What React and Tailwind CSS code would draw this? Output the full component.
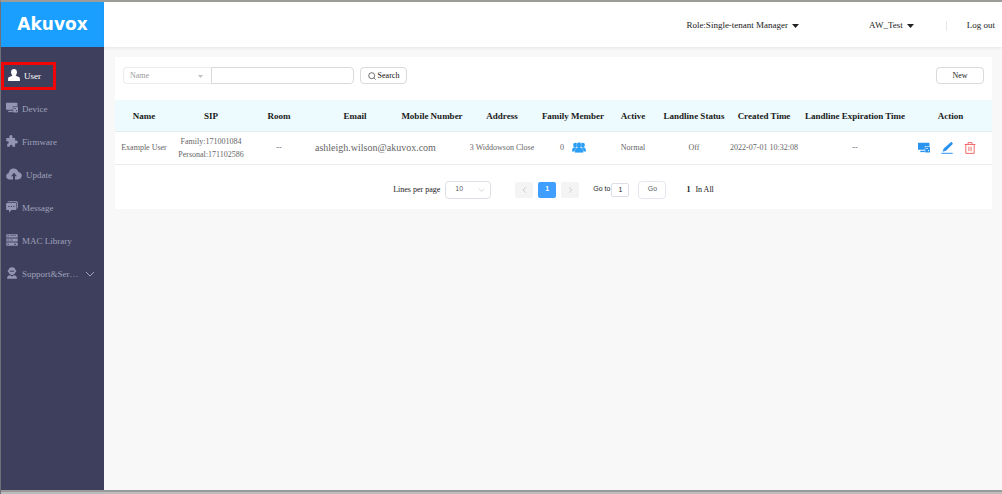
import { useState } from "react"

const UserIcon = () => (
  <svg className="h-3 w-3" viewBox="0 0 12 12" fill="currentColor">
    <ellipse cx="6" cy="3.2" rx="2.9" ry="3.2" />
    <path d="M4.200 5.300h3.600v1.400l3 1.300c.8.3 1.100.9 1.100 1.800V12H.1V9.800c0-.9.300-1.500 1.100-1.800l3-1.300z" />
  </svg>
)

const DeviceIcon = ({ className }) => (
  <svg className={className} viewBox="0 0 13 11" fill="currentColor">
    <path d="M.6.4h11.200c.3 0 .6.3.6.6v3.100H7.400V8H.6C.3 8 0 7.700 0 7.400V1C0 .7.3.4.6.4z" />
    <path d="M2.500 9h4.900v1.500H2.500z" />
    <path d="M8.300 4.600h4.200c.3 0 .5.2.5.5v5.200c0 .3-.2.500-.5.500H8.300c-.3 0-.5-.2-.5-.5V5.100c0-.3.2-.5.5-.5zM9 6.200v.8h1.800v-.8zm2 1.900v1.400h1V8.100z" fillRule="evenodd" />
  </svg>
)

const FirmwareIcon = () => (
  <svg className="h-3 w-3" viewBox="0 0 12 12" fill="currentColor">
    <path d="M3.400 3c-.4-1.700.3-2.900 1.500-2.900S6.800 1.300 6.400 3h2.700v2.600c1.600-.4 2.700.2 2.700 1.400S10.700 8.800 9.100 8.400v3.300H6.500c.2-1.300-.4-2-1.300-2s-1.500.7-1.300 2H1.200V8.800c1 .1 1.500-.4 1.500-1.200S2.100 6.200.3 6.400V3z" />
  </svg>
)

const UpdateIcon = () => (
  <svg className="h-3 w-4" viewBox="0 0 16 12" fill="currentColor">
    <path fillRule="evenodd" d="M3.600 11.500C1.500 11.500.2 10 .2 8.200c0-1.600 1-2.800 2.500-3.200C2.900 2.300 5 .4 7.700.4c2.300 0 4.100 1.400 4.700 3.500 2 .2 3.400 1.800 3.400 3.700 0 2.200-1.600 3.900-3.900 3.900H9V8.300h2L8 4.800 5 8.300h2v3.200z" />
  </svg>
)

const MessageIcon = () => (
  <svg className="h-3 w-3" viewBox="0 0 12 12" fill="currentColor">
    <path d="M2.600.3h7.800c.9 0 1.500.6 1.500 1.500v4.500c0 .7-.3 1.200-.8 1.400V3c0-1.100-.7-1.700-1.700-1.700H1.300c.2-.6.7-1 1.300-1z" />
    <path fillRule="evenodd" d="M1.400 1.900h7.700c.8 0 1.300.5 1.300 1.300v4.500c0 .8-.5 1.300-1.300 1.300H5.500L3 11.500V9H1.400C.6 9 .1 8.500.1 7.700V3.200c0-.8.5-1.300 1.300-1.300zM2.200 4.900v1.200h1.200V4.900zm2.500 0v1.200h1.200V4.900zm2.500 0v1.200h1.200V4.900z" />
  </svg>
)

const LibraryIcon = () => (
  <svg className="h-3 w-3" viewBox="0 0 12 12" fill="currentColor">
    <path fillRule="evenodd" d="M.3.2h11.400v3.200H.3zM1.500 1.300v1h1.300v-1zM4 1.600v.5h6v-.5z" />
    <path fillRule="evenodd" d="M.3 4.400h11.400v3.200H.3zM1.500 5.500v1h1.300v-1zM4 5.800v.5h3v-.5z" />
    <path fillRule="evenodd" d="M.3 8.600h11.400v3.200H.3zM1.500 9.700v1h1.300v-1zM8 9.700v1h2v-1z" />
  </svg>
)

const SupportIcon = () => (
  <svg className="h-3 w-3" viewBox="0 0 12 12" fill="currentColor">
    <path d="M6 .2c2.100 0 3.400 1.300 3.500 3 .6.1.8.4.8 1s-.3 1-.9 1C8.700 7 7.500 8 6 8S3.300 7 2.600 5.200c-.6 0-.9-.4-.9-1s.2-.9.8-1C2.600 1.500 3.900.2 6 .2z" />
    <path d="M3.800 3.700c1.600.1 2.900-.2 4.400 0v.7c-1.500.4-2.900.4-4.400 0z" fill="#3d3f5c" />
    <path d="M1 11.800c0-2.200 1.100-3.400 3.100-3.600L6 9.400l1.900-1.200c2 .2 3.100 1.400 3.100 3.600z" />
  </svg>
)

const FamilyIcon = () => (
  <svg className="h-[11px] w-[14px]" viewBox="0 0 14 11" fill="currentColor">
    <circle cx="3.300" cy="3" r="2.200" />
    <circle cx="10.700" cy="3" r="2.200" />
    <path d="M0 9.400c0-2.500.9-4.100 3-4.100S5.500 7 5.500 9.400zM8.500 9.400c0-2.500.4-4.100 2.500-4.100s3 1.600 3 4.100z" />
    <path
      d="M7 .3c1.500 0 2.400 1.100 2.400 2.600 0 1.200-.5 2-1.100 2.600 2 .5 3 1.900 3 5.200H2.700c0-3.300 1-4.700 3-5.200-.6-.6-1.100-1.400-1.100-2.600C4.600 1.400 5.500.3 7 .3z"
      stroke="#fff"
      strokeWidth=".3"
    />
  </svg>
)

const EditIcon = () => (
  <svg className="h-3 w-3" viewBox="0 0 12 12" fill="currentColor">
    <path d="M9.500.4c.4-.4.900-.4 1.300-.1l.7.700c.4.400.4.900 0 1.300L5 8.700l-3.500 1.100 1.200-3.400z" />
    <path d="M.3 10.800h11.400v1H.3z" />
  </svg>
)

const TrashIcon = () => (
  <svg className="h-3 w-3" viewBox="0 0 12 12" fill="none" stroke="currentColor" strokeWidth="1">
    <path d="M.6 2.500h10.800M4 2.300V.6h4v1.700M1.800 2.700v8.700h8.400V2.700M4.900 4.700v4.500M7.100 4.700v4.500" />
  </svg>
)

const Chevron = ({ className }) => (
  <svg className={className} viewBox="0 0 10 6" fill="none" stroke="currentColor" strokeWidth="1">
    <path d="M1 1l4 4 4-4" />
  </svg>
)

const Caret = () => (
  <svg className="h-1 w-[7px]" viewBox="0 0 7 4" fill="currentColor">
    <path d="M0 0h7L3.500 4z" />
  </svg>
)

const menu = [
  { label: "Device", icon: <DeviceIcon className="h-[11px] w-3" /> },
  { label: "Firmware", icon: <FirmwareIcon /> },
  { label: "Update", icon: <UpdateIcon /> },
  { label: "Message", icon: <MessageIcon /> },
  { label: "MAC Library", icon: <LibraryIcon /> },
  { label: "Support&Ser…", icon: <SupportIcon />, more: true },
]

const columns = [
  { title: "Name", width: "w-[58px]" },
  { title: "SIP", width: "w-[76px]" },
  { title: "Room", width: "w-[60px]" },
  { title: "Email", width: "w-[92px]" },
  { title: "Mobile Number", width: "w-[62px]" },
  { title: "Address", width: "w-[78px]" },
  { title: "Family Member", width: "w-[64px]" },
  { title: "Active", width: "w-[56px]" },
  { title: "Landline Status", width: "w-[66px]" },
  { title: "Created Time", width: "w-[74px]" },
  { title: "Landline Expiration Time", width: "w-[108px]" },
  { title: "Action", width: "w-[83px]" },
]

const users = [
  {
    name: "Example User",
    family: "171001084",
    personal: "171102586",
    room: "--",
    email: "ashleigh.wilson@akuvox.com",
    mobile: "",
    address: "3 Widdowson Close",
    members: 0,
    active: "Normal",
    landline: "Off",
    created: "2022-07-01 10:32:08",
    expiration: "--",
  },
]

export default function App() {
  const [field, setField] = useState("Name")
  const [keyword, setKeyword] = useState("")
  const [lines, setLines] = useState("10")
  const [page, setPage] = useState("1")

  return (
    <div className="flex h-screen flex-col overflow-hidden border-t-2 border-l border-t-[#9c9c98] border-l-[#6f7078] bg-[#f8f8f8] font-['Liberation_Serif',serif] text-[9px] text-[#222]">
      <div className="flex min-h-0 flex-1">
        {/* Sidebar */}
        <aside className="flex w-[103px] shrink-0 flex-col bg-[#3d3f5c]">
          <div className="flex h-[45px] items-center justify-center bg-[#1a9fff] font-['DejaVu_Sans',sans-serif] text-[17px] font-bold text-white">
            Akuvox
          </div>
          <nav className="pt-3 text-[#a0a2bd]">
            <div className="flex h-[33px] items-center">
              <a href="#user" className="flex h-[28px] w-[55px] items-center gap-1 border-3 border-[#f20505] pl-1 text-white">
                <span className="shrink-0 pb-[2px]">
                  <UserIcon />
                </span>
                <span className="pt-[2px]">User</span>
              </a>
            </div>
            {menu.map((item) => (
              <a key={item.label} href={`#${item.label}`} className="flex h-[33px] items-center gap-1 pl-[5px]">
                <span className="shrink-0 pb-[2px] text-[#9395b3]">{item.icon}</span>
                <span className="pt-[2px] whitespace-nowrap">{item.label}</span>
                {item.more && <Chevron className="ml-[2px] h-[6px] w-[10px]" />}
              </a>
            ))}
          </nav>
        </aside>

        <div className="flex min-w-0 flex-1 flex-col">
          {/* Top bar */}
          <header className="flex h-[45px] shrink-0 items-center justify-end bg-white pt-[2px] pr-[7px] shadow-[0_1px_3px_rgba(0,0,0,0.08)]">
            <button className="mr-[70px] flex items-center gap-1">
              Role:Single-tenant Manager <Caret />
            </button>
            <button className="mr-8 flex items-center gap-1">
              AW_Test <Caret />
            </button>
            <span className="mr-5 h-[10px] w-px bg-[#e6e6e6]"></span>
            <a href="#logout">Log out</a>
          </header>

          <main className="p-[10px] pl-[11px]">
            <div className="bg-white pb-[10px]">
              {/* Search */}
              <div className="flex items-center px-2 py-[10px] text-[8px]">
                <div className="relative w-[88px]">
                  <select
                    aria-label="Search field"
                    value={field}
                    onChange={(e) => setField(e.target.value)}
                    className="h-[17px] w-full appearance-none rounded-l-sm border border-r-0 border-[#ebebeb] bg-white pt-px pl-[6px] text-[#999]"
                  >
                    <option>Name</option>
                    <option>Email</option>
                  </select>
                  <svg className="absolute top-[8px] right-2 h-[3px] w-[5px] text-[#c0c0c0]" viewBox="0 0 5 3" fill="currentColor">
                    <path d="M0 0h5L2.500 3z" />
                  </svg>
                </div>
                <input
                  aria-label="Keyword"
                  value={keyword}
                  onChange={(e) => setKeyword(e.target.value)}
                  className="h-[17px] w-[143px] rounded-r-sm border border-[#d9d9d9] px-1"
                />
                <button className="ml-[6px] flex h-[17px] w-[47px] items-center justify-center gap-[2px] rounded-sm border border-[#d9d9d9] text-[#111]">
                  <svg className="h-2 w-2" viewBox="0 0 8 8" fill="none" stroke="currentColor" strokeWidth=".6">
                    <circle cx="3.700" cy="3.700" r="3" />
                    <path d="M6 6l1.600 1.600" />
                  </svg>
                  Search
                </button>
                <button className="ml-auto h-[17px] w-12 rounded-sm border border-[#d9d9d9]">New</button>
              </div>

              {/* Users */}
              <table className="mt-[6px] w-full table-fixed text-center text-[8px] whitespace-nowrap text-[#666]">
                <thead>
                  <tr className="h-[31px] border-b border-[#e4ecf0] bg-[#edfafe] text-[9px] text-[#1a1a1a]">
                    {columns.map((col) => (
                      <th key={col.title} className={`${col.width} p-0 pt-[2px] font-bold`}>
                        {col.title}
                      </th>
                    ))}
                  </tr>
                </thead>
                <tbody>
                  {users.map((user) => (
                    <tr key={user.name} className="h-[33px] border-b border-[#ebebeb]">
                      <td>{user.name}</td>
                      <td className="leading-[13px]">
                        Family:{user.family}
                        <br />
                        Personal:{user.personal}
                      </td>
                      <td>{user.room}</td>
                      <td className="pl-[6px] text-left text-[10px]">{user.email}</td>
                      <td>{user.mobile}</td>
                      <td>{user.address}</td>
                      <td>
                        <div className="flex items-center justify-center gap-2">
                          {user.members}
                          <span className="text-[#2a9df4]">
                            <FamilyIcon />
                          </span>
                        </div>
                      </td>
                      <td>{user.active}</td>
                      <td>{user.landline}</td>
                      <td>{user.created}</td>
                      <td>{user.expiration}</td>
                      <td>
                        <div className="flex items-center justify-center gap-[11px] pr-2 text-[#2a93ee]">
                          <button aria-label="Devices">
                            <DeviceIcon className="h-[11px] w-3" />
                          </button>
                          <button aria-label="Edit">
                            <EditIcon />
                          </button>
                          <button aria-label="Delete" className="text-[#f56c6c]">
                            <TrashIcon />
                          </button>
                        </div>
                      </td>
                    </tr>
                  ))}
                </tbody>
              </table>

              {/* Pagination */}
              <div className="mt-4 flex items-center justify-center text-[8px]">
                <label htmlFor="lines">Lines per page</label>
                <div className="relative ml-[5px] w-[46px]">
                  <select
                    id="lines"
                    value={lines}
                    onChange={(e) => setLines(e.target.value)}
                    className="h-[18px] w-full appearance-none rounded-sm border border-[#dcdfe6] bg-white pl-[9px] font-['Liberation_Sans',sans-serif] text-[7px] text-[#606266]"
                  >
                    <option>10</option>
                    <option>20</option>
                    <option>50</option>
                  </select>
                  <Chevron className="absolute top-[7px] right-[6px] h-1 w-[7px] text-[#c0c4cc]" />
                </div>
                <div className="ml-6 flex gap-[5px] text-[#b4b8bf]">
                  <button aria-label="Previous page" className="flex h-4 w-[18px] items-center justify-center rounded-xs bg-[#f4f4f5]">
                    <Chevron className="h-1 w-[7px] rotate-90" />
                  </button>
                  <button className="h-4 w-[18px] rounded-xs bg-[#409eff] font-['Liberation_Sans',sans-serif] text-[7px] font-bold text-white">
                    1
                  </button>
                  <button aria-label="Next page" className="flex h-4 w-[18px] items-center justify-center rounded-xs bg-[#f4f4f5]">
                    <Chevron className="h-1 w-[7px] -rotate-90" />
                  </button>
                </div>
                <div className="ml-[14px] flex items-center gap-px font-['Liberation_Sans',sans-serif] text-[7px]">
                  <label htmlFor="page">Go to</label>
                  <input
                    id="page"
                    value={page}
                    onChange={(e) => setPage(e.target.value)}
                    className="h-[14px] w-[18px] rounded-xs border border-[#dcdfe6] text-center"
                  />
                  <button className="ml-2 h-[18px] w-7 rounded-sm border border-[#e4e7ed] text-[#606266]">Go</button>
                </div>
                <span className="ml-5 flex items-baseline gap-[5px]">
                  <b>1</b> In All
                </span>
              </div>
            </div>
          </main>
        </div>
      </div>
      <footer className="h-1 shrink-0 border-t-2 border-[#9a9a9a] bg-[#bcbcbc]"></footer>
    </div>
  )
}
